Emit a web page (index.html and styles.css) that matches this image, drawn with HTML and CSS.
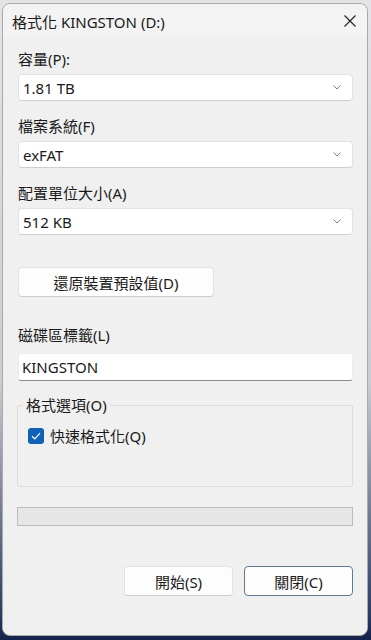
FILE: index.html
```html
<!DOCTYPE html>
<html lang="zh-Hant">
<head>
<meta charset="UTF-8" />
<title>格式化 KINGSTON (D:)</title>
<link rel="stylesheet" href="styles.css">
</head>
<body>

<div class="window">
  <div class="titlebar">
    <span class="title">格式化 KINGSTON (D:)</span>
    <span class="close">
      <svg width="12" height="12" viewBox="0 0 12 12"><path d="M0.5 0.5 L11.5 11.5 M11.5 0.5 L0.5 11.5" stroke="#1f1f1f" stroke-width="1.1" fill="none"/></svg>
    </span>
  </div>

  <div class="content">
    <label class="field-label">容量(P):</label>
    <div class="select">
      <span>1.81 TB</span>
      <svg class="chevron" width="8" height="5" viewBox="0 0 8 5"><path d="M0.5 0.5 L4 4 L7.5 0.5" stroke="#808080" stroke-width="1" fill="none"/></svg>
    </div>

    <label class="field-label">檔案系統(F)</label>
    <div class="select">
      <span>exFAT</span>
      <svg class="chevron" width="8" height="5" viewBox="0 0 8 5"><path d="M0.5 0.5 L4 4 L7.5 0.5" stroke="#808080" stroke-width="1" fill="none"/></svg>
    </div>

    <label class="field-label">配置單位大小(A)</label>
    <div class="select">
      <span>512 KB</span>
      <svg class="chevron" width="8" height="5" viewBox="0 0 8 5"><path d="M0.5 0.5 L4 4 L7.5 0.5" stroke="#808080" stroke-width="1" fill="none"/></svg>
    </div>

    <button class="btn btn-restore" type="button">還原裝置預設值(D)</button>

    <label class="field-label label-name">磁碟區標籤(L)</label>
    <div class="textbox">KINGSTON</div>

    <fieldset class="group">
      <legend>格式選項(O)</legend>
      <div class="check-row">
        <span class="checkbox">
          <svg width="10" height="8" viewBox="0 0 10 8"><path d="M1 4.2 L3.8 6.8 L9 1.2" stroke="#fff" stroke-width="1.2" fill="none"/></svg>
        </span>
        <span>快速格式化(Q)</span>
      </div>
    </fieldset>

    <div class="progress"></div>

    <div class="actions">
      <button class="btn" type="button">開始(S)</button>
      <button class="btn btn-default" type="button">關閉(C)</button>
    </div>
  </div>
</div>

</body>
</html>
```

FILE: styles.css
```css
html, body { margin: 0; height: 100%; }
body { background: linear-gradient(#e4e4e6 0%, #c9ccd2 60%, #2d3c63 96%, #14214a 100%); font-family: "Noto Sans", "Noto Sans CJK TC", sans-serif; font-size: 15px; color: #1a1a1a; overflow: hidden; }

.window { box-sizing: border-box; width: 366px; height: 633px; margin: 3px 0 0 2px; background: #f0f0f0; border: 1px solid #a9a9a9; border-radius: 8px; overflow: hidden; }
.titlebar { height: 34px; background: #f3f3f3; display: flex; align-items: center; justify-content: space-between; padding: 0 10px 0 9px; }
.title { font-size: 15px; color: #1a1a1a; }
.close { display: flex; align-items: center; padding-right: 1px; }

.content { padding: 11px 14px 0 15px; display: flex; flex-direction: column; }
.field-label { display: block; line-height: 20px; margin-bottom: 5px; }

.select { box-sizing: border-box; height: 27px; background: #fff; border: 1px solid #e2e2e2; border-bottom-color: #cfcfcf; border-radius: 4px; display: flex; align-items: center; justify-content: space-between; padding: 0 11px 0 4px; margin-bottom: 15px; }

.btn { box-sizing: border-box; height: 30px; background: #fdfdfd; border: 1px solid #e2e2e2; border-bottom-color: #cccccc; border-radius: 4px; font-family: inherit; font-size: 15px; color: #1a1a1a; padding: 0; }
.btn-restore { width: 196px; margin-top: 17px; }

.label-name { margin-top: 28px; margin-bottom: 8px; }
.textbox { box-sizing: border-box; height: 28px; background: #fff; border: 1px solid #ececec; border-bottom: 1px solid #8a8a8a; border-radius: 3px; padding: 0 3px; line-height: 26px; }

.group { margin: 14px 0 0 -1px; padding: 0 0 0 10px; height: 92px; box-sizing: border-box; border: 1px solid #dcdcdc; border-radius: 2px; }
.group legend { padding: 0 3px; margin-left: -5px; line-height: 20px; }
.check-row { display: flex; align-items: center; gap: 6px; margin-top: 10px; }
.checkbox { width: 16px; height: 16px; border-radius: 3px; background: #1060b8; display: flex; align-items: center; justify-content: center; }

.progress { height: 19px; box-sizing: border-box; margin: 20px 0 0 -1px; background: #e6e6e6; border: 1px solid #bcbcbc; }

.actions { display: flex; justify-content: flex-end; gap: 11px; margin-top: 40px; }
.actions .btn { width: 109px; height: 30px; }
.btn-default { border: 1px solid #5d7c98; }
```
